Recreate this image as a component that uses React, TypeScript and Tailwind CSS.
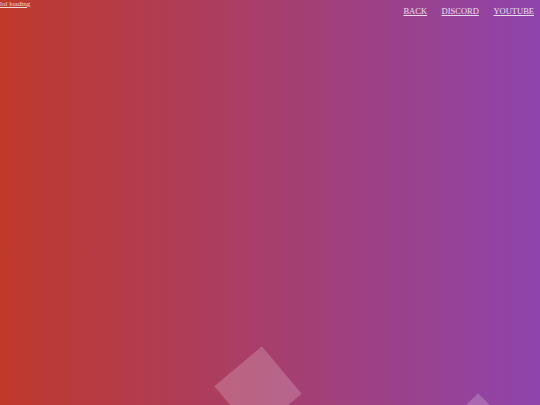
import React from 'react'

const LINKS = ['BACK', 'DISCORD', 'YOUTUBE']

export default function App() {
  return (
    <div
      className="relative w-[540px] h-[405px] overflow-hidden bg-[linear-gradient(to_right,#c0392b,#8e44ad)]"
      style={{ fontFamily: '"Liberation Serif", serif' }}
    >
      {/* loading label */}
      <a className="absolute left-0 top-0 text-[7px] leading-[9px] text-white/80 underline">lol loading</a>

      {/* nav */}
      <nav className="flex justify-end gap-[14.5px] pr-[6px] pt-[5px]">
        {LINKS.map((l) => (
          <a key={l} className="text-[8.5px] leading-[12px] text-white/80 underline">
            {l}
          </a>
        ))}
      </nav>

      {/* floating squares */}
      <div className="absolute left-[227px] top-[359px] w-[62px] h-[62px] bg-white/20 rotate-[50deg]" />
      <div className="absolute left-[447px] top-[406px] w-[62px] h-[62px] bg-white/20 rotate-45" />
    </div>
  )
}
